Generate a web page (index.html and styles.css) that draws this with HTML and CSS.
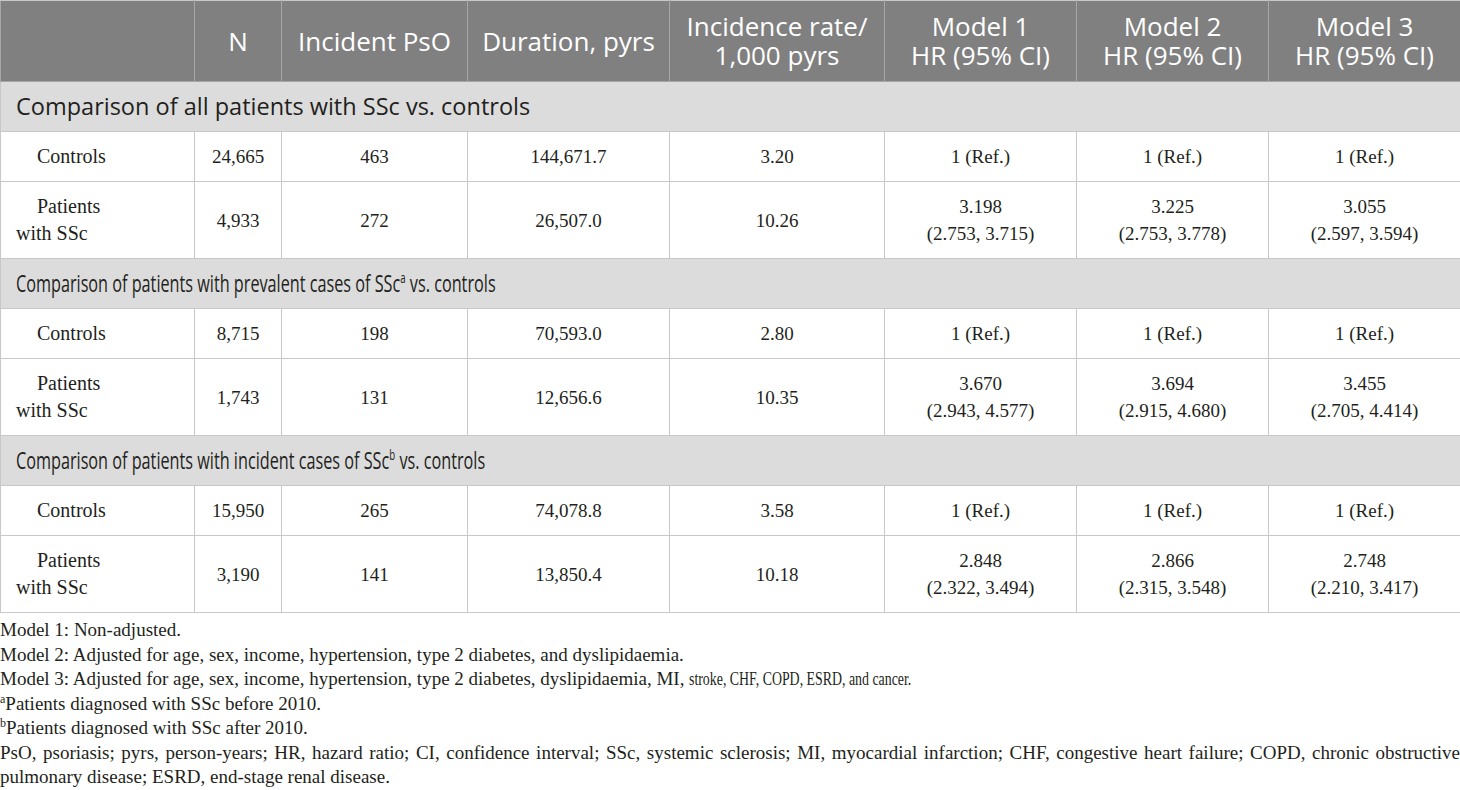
FILE: index.html
```html
<!DOCTYPE html>
<html lang="en">
<head>
<meta charset="UTF-8">
<title>Incidence of psoriasis in patients with SSc</title>
<link rel="stylesheet" href="styles.css">
</head>
<body>
<table class="results">
    <colgroup>
        <col style="width:194px">
        <col style="width:87px">
        <col style="width:186px">
        <col style="width:202px">
        <col style="width:215px">
        <col style="width:192px">
        <col style="width:192px">
        <col style="width:192px">
    </colgroup>
    <thead>
        <tr>
            <th></th>
            <th>N</th>
            <th>Incident PsO</th>
            <th>Duration, pyrs</th>
            <th>Incidence rate/<br>1,000 pyrs</th>
            <th>Model 1<br>HR (95% CI)</th>
            <th>Model 2<br>HR (95% CI)</th>
            <th>Model 3<br>HR (95% CI)</th>
        </tr>
    </thead>
    <tbody>
        <tr class="section">
            <td colspan="8">Comparison of all patients with SSc vs. controls</td>
        </tr>
        <tr>
            <td class="group">Controls</td>
            <td>24,665</td>
            <td>463</td>
            <td>144,671.7</td>
            <td>3.20</td>
            <td>1 (Ref.)</td>
            <td>1 (Ref.)</td>
            <td>1 (Ref.)</td>
        </tr>
        <tr>
            <td class="group">Patients<br>with SSc</td>
            <td>4,933</td>
            <td>272</td>
            <td>26,507.0</td>
            <td>10.26</td>
            <td>3.198<br>(2.753, 3.715)</td>
            <td>3.225<br>(2.753, 3.778)</td>
            <td>3.055<br>(2.597, 3.594)</td>
        </tr>

        <tr class="section">
            <td colspan="8"><span class="narrow">Comparison of patients with prevalent cases of SSc<sup>a</sup> vs. controls</span></td>
        </tr>
        <tr>
            <td class="group">Controls</td>
            <td>8,715</td>
            <td>198</td>
            <td>70,593.0</td>
            <td>2.80</td>
            <td>1 (Ref.)</td>
            <td>1 (Ref.)</td>
            <td>1 (Ref.)</td>
        </tr>
        <tr>
            <td class="group">Patients<br>with SSc</td>
            <td>1,743</td>
            <td>131</td>
            <td>12,656.6</td>
            <td>10.35</td>
            <td>3.670<br>(2.943, 4.577)</td>
            <td>3.694<br>(2.915, 4.680)</td>
            <td>3.455<br>(2.705, 4.414)</td>
        </tr>

        <tr class="section">
            <td colspan="8"><span class="narrow">Comparison of patients with incident cases of SSc<sup>b</sup> vs. controls</span></td>
        </tr>
        <tr>
            <td class="group">Controls</td>
            <td>15,950</td>
            <td>265</td>
            <td>74,078.8</td>
            <td>3.58</td>
            <td>1 (Ref.)</td>
            <td>1 (Ref.)</td>
            <td>1 (Ref.)</td>
        </tr>
        <tr>
            <td class="group">Patients<br>with SSc</td>
            <td>3,190</td>
            <td>141</td>
            <td>13,850.4</td>
            <td>10.18</td>
            <td>2.848<br>(2.322, 3.494)</td>
            <td>2.866<br>(2.315, 3.548)</td>
            <td>2.748<br>(2.210, 3.417)</td>
        </tr>
    </tbody>
</table>

<div class="notes">
    <p>Model 1: Non-adjusted.</p>
    <p>Model 2: Adjusted for age, sex, income, hypertension, type 2 diabetes, and dyslipidaemia.</p>
    <p>Model 3: Adjusted for age, sex, income, hypertension, type 2 diabetes, dyslipidaemia, MI, <span class="squeeze">stroke, CHF, COPD, ESRD, and cancer.</span></p>
    <p><sup>a</sup>Patients diagnosed with SSc before 2010.</p>
    <p><sup>b</sup>Patients diagnosed with SSc after 2010.</p>
    <p class="abbr">PsO, psoriasis; pyrs, person-years; HR, hazard ratio; CI, confidence interval; SSc, systemic sclerosis; MI, myocardial infarction; CHF, congestive heart failure; COPD, chronic obstructive pulmonary disease; ESRD, end-stage renal disease.</p>
</div>
</body>
</html>
```

FILE: styles.css
```css
body {
    margin: 0;
    background: #fff;
    color: #231f20;
    font-family: "Liberation Serif", "Times New Roman", serif;
}

.results {
    width: 1460px;
    table-layout: fixed;
    border-collapse: collapse;
}

.results th {
    background-color: #808080;
    color: #fff;
    font-family: "Open Sans", sans-serif;
    font-size: 26px;
    font-weight: normal;
    line-height: 29px;
    padding: 11px 4px;
    height: 58px;
    border: 1px solid #a6a6a6;
    border-top-color: #c8c8c8;
    text-align: center;
}

.results td {
    font-size: 19px;
    line-height: 27px;
    padding: 11px 10px;
    border: 1px solid #c8c8c8;
    text-align: center;
}

.results td.group {
    text-align: left;
    padding-left: 15px;
    text-indent: 21px;
    font-size: 20px;
}

.results .section td {
    background-color: #dcdcdc;
    font-family: "Open Sans", sans-serif;
    font-size: 23.5px;
    line-height: 27px;
    text-align: left;
    padding-left: 15px;
}

.results .section sup {
    font-size: 14px;
    line-height: 0;
}

.narrow {
    display: inline-block;
    transform: scaleX(0.69);
    transform-origin: left center;
    white-space: nowrap;
}

.notes {
    margin-top: 5px;
    font-size: 19px;
    line-height: 24.5px;
}

.notes p {
    margin: 0;
}

.notes sup {
    font-size: 12px;
    line-height: 0;
}

.squeeze {
    display: inline-block;
    transform: scaleX(0.73);
    transform-origin: left center;
    white-space: nowrap;
}

.notes .abbr {
    text-align: justify;
}
```
